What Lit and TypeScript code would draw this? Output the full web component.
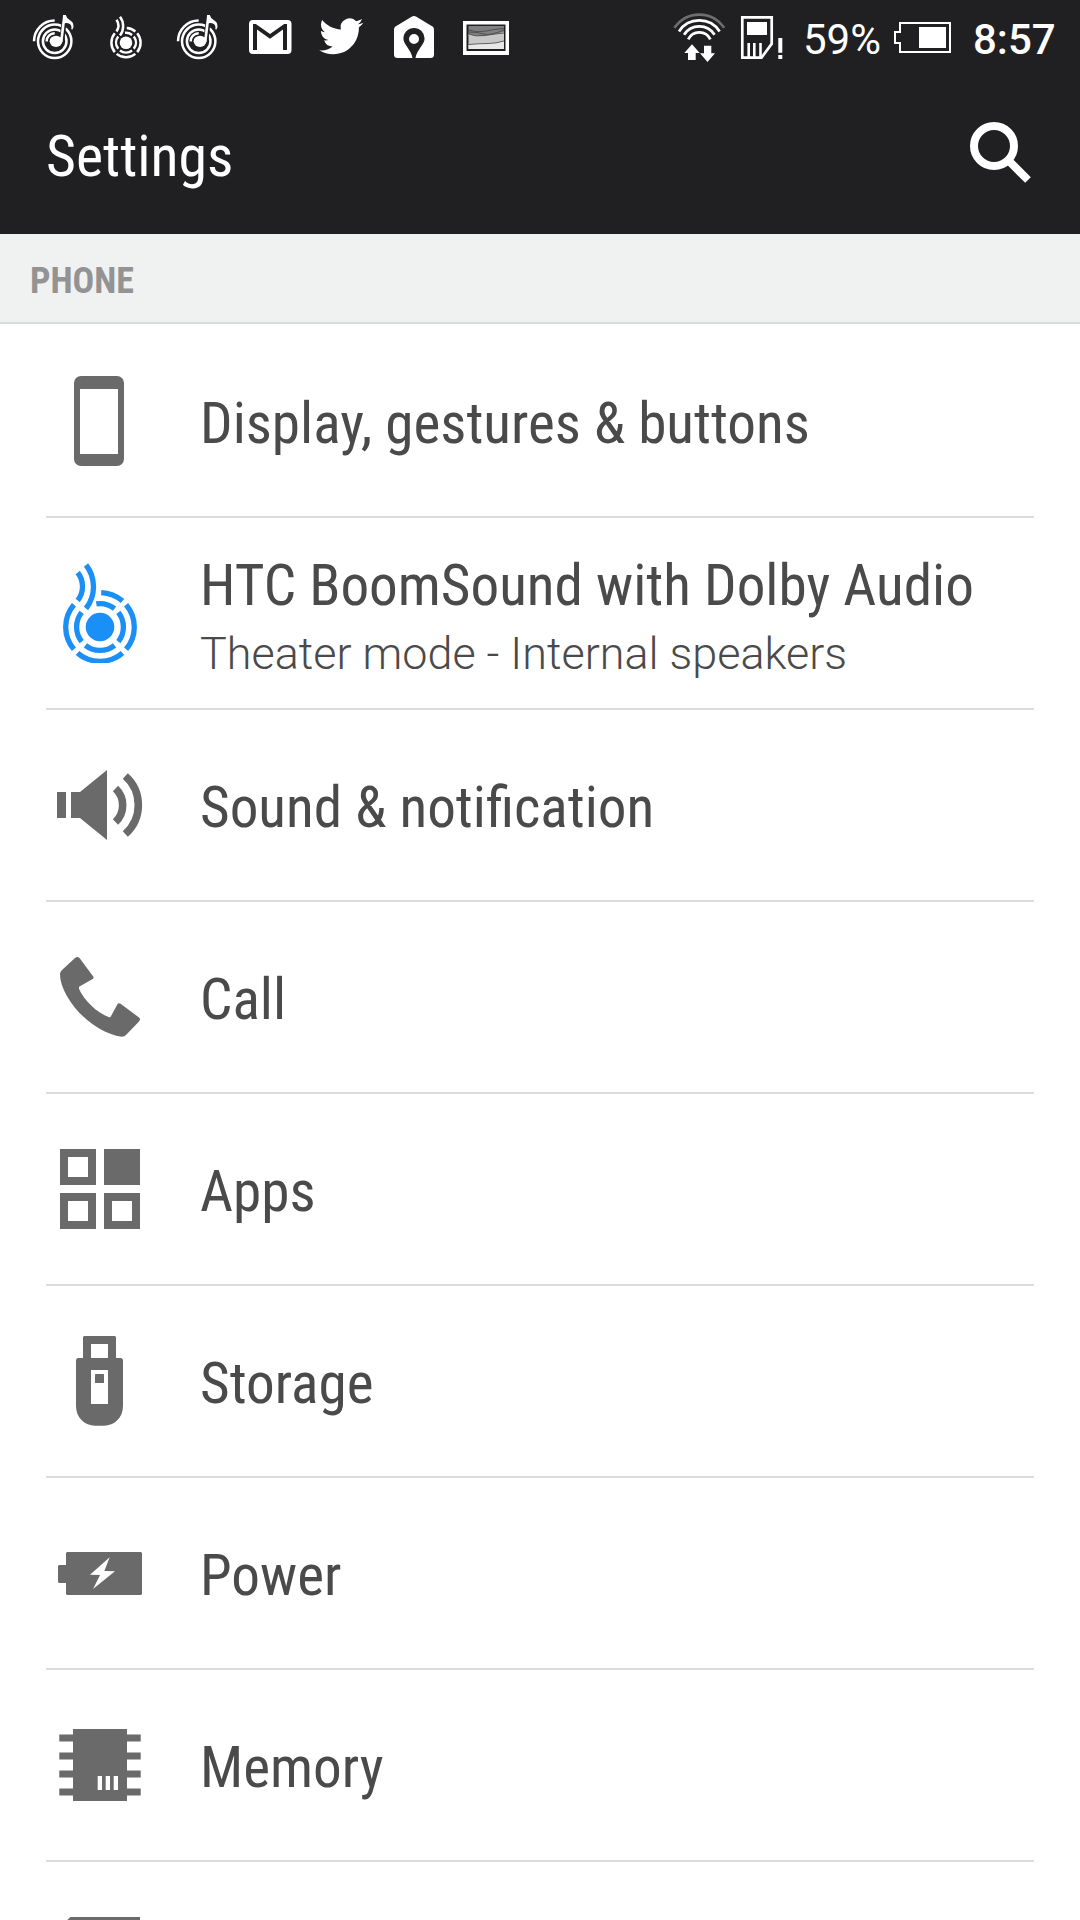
import { LitElement, html, svg, css, TemplateResult, SVGTemplateResult } from "lit";
import { customElement, property } from "lit/decorators.js";

/** Path of a circular arc; angles are in degrees, clockwise from the top. */
const arc = (cx: number, cy: number, r: number, from: number, to: number): string => {
  const at = (deg: number) => {
    const a = (deg * Math.PI) / 180;
    return `${(cx + r * Math.sin(a)).toFixed(2)} ${(cy - r * Math.cos(a)).toFixed(2)}`;
  };
  return `M${at(from)}A${r} ${r} 0 ${to - from > 180 ? 1 : 0} 1 ${at(to)}`;
};

/* ---------- list icons, 100 x 100 ---------- */
const rowIcons: Record<string, SVGTemplateResult> = {
  display: svg`<path fill-rule="evenodd" d="M31 5H67a7 7 0 0 1 7 7V88a7 7 0 0 1-7 7H31a7 7 0 0 1-7-7V12a7 7 0 0 1 7-7ZM30 18V83H68V18Z"/>`,
  boomsound: svg`
    <g fill="none" stroke="#1a8ff5" stroke-width="5.3">
      <path d=${arc(50, 64, 34.3, 2, 41)}/>
      <path d=${arc(50, 64, 34.3, 49.5, 130.5)}/>
      <path d=${arc(50, 64, 34.3, 139, 221)}/>
      <path d=${arc(50, 64, 34.3, 229.5, 310.5)}/>
      <path d=${arc(50, 64, 23.4, -9, 38.5)}/>
      <path d=${arc(50, 64, 23.4, 51.5, 128.5)}/>
      <path d=${arc(50, 64, 23.4, 141.5, 218.5)}/>
      <path d=${arc(50, 64, 23.4, 231.5, 308.5)}/>
      <path d="M36 2A35.3 35.3 0 0 1 36 45.5"/>
      <path d="M27.7 9.5A22.8 22.8 0 0 1 27.7 37.5"/>
    </g>
    <circle cx="50" cy="64" r="14.3" fill="#1a8ff5"/>`,
  sound: svg`
    <path d="M7 37H16V63H7ZM21 37H30L57 15V85L30 63H21Z"/>
    <path fill="none" stroke="#6a6a6a" stroke-width="7.6" d="M65.5 33.5A23 23 0 0 1 65.5 66.9M75.3 21A38.8 38.8 0 0 1 75.3 79"/>`,
  call: svg`<path d="M10 27Q10 25 12 23L25 11Q27.5 9 29.7 11.3L43.2 29.5Q44.3 31 42.6 32L29.5 39.5Q28.6 40.3 29.3 42.5C34 53 47 66 59.2 70.3L60.5 70L67.3 57.5Q68.5 55.3 70.6 56.8L89 70.5Q91 72 89 74.5L76 88Q74.5 89.8 71.5 89.7C40 85 10 50 10 27Z"/>`,
  apps: svg`<path fill-rule="evenodd" d="M10 10H46V46H10ZM18 18V38H38V18ZM54 10H90V46H54ZM10 54H46V90H10ZM18 62V82H38V62ZM54 54H90V90H54ZM62 62V82H82V62Z"/>`,
  storage: svg`
    <path fill-rule="evenodd" d="M34 5H65L66 6V27H71a2.500 2.500 0 0 1 2 2V75C73 87 64 94.700 54 94.700H45C35 94.700 26 87 26 75V29a2.500 2.500 0 0 1 2-2H33V6ZM41 13V27H58V13ZM41 39V73H58V39Z"/>
    <rect x="45" y="43" width="9" height="9" rx=".6"/>`,
  power: svg`<path fill-rule="evenodd" d="M17 29H91L92 30V71L91 72H17L16 71V60H9L8 59V43L9 42H16V30ZM59.700 34.300L40 51.700L50 52L43 66L65 48.300L54.300 48Z"/>`,
  memory: svg`
    <path d="M23 14H77V86H23Z"/>
    <path d="M9.300 19.400H90.700V26.600H9.300ZM9.300 37.400H90.700V44.600H9.300ZM9.300 55.400H90.700V62.600H9.300ZM9.300 73.400H90.700V80.600H9.300Z"/>
    <path fill="#fff" d="M47.700 61H52V75H47.700ZM55.700 61H60V75H55.700ZM63.700 61H68V75H63.700Z"/>`,
  card: svg`<path d="M20.500 10H90V96H10V20Z"/>`,
};

/* ---------- status bar icons, 72 x 76 ---------- */
const music = svg`
  <g fill="none" stroke="#fff" stroke-width="2.500">
    <circle cx="36.700" cy="41.300" r="16.700"/>
    <circle cx="36.700" cy="41.300" r="11.800"/>
    <path d=${arc(36.7, 41.3, 20.7, 270, 360)}/>
    <path d=${arc(36.7, 41.3, 8, 268, 360)}/>
  </g>
  <path fill="none" stroke="#202022" stroke-width="5" d="M44 40L46.600 17"/>
  <ellipse cx="38" cy="41.300" rx="6.400" ry="5.600" fill="#fff"/>
  <path fill="none" stroke="#fff" stroke-width="2.600" d="M43.300 41.500L46.400 15.500"/>
  <path fill="#fff" d="M45 15H47.800Q48.500 18.500 52 20.200Q57.500 23.500 54.500 29.600L53.300 29.200Q54.300 24.500 50 23.300Q47 22.500 45.500 24Z"/>`;

const statusIcons: SVGTemplateResult[] = [
  music,
  svg`
    <g fill="none" stroke="#fff" stroke-width="2.500">
      <path d=${arc(36, 42.7, 14.6, 3, 40)}/>
      <path d=${arc(36, 42.7, 14.6, 50, 130)}/>
      <path d=${arc(36, 42.7, 14.6, 140, 220)}/>
      <path d=${arc(36, 42.7, 14.6, 230, 310)}/>
      <path d=${arc(36, 42.7, 9.9, -6, 38)}/>
      <path d=${arc(36, 42.7, 9.9, 52, 128)}/>
      <path d=${arc(36, 42.7, 9.9, 142, 218)}/>
      <path d=${arc(36, 42.7, 9.9, 232, 308)}/>
      <path d="M30 16.800A15.500 15.500 0 0 1 30 35.500M26.500 19.800A10.500 10.500 0 0 1 26.500 31.500"/>
    </g>
    <circle cx="36" cy="42.700" r="6.300" fill="#fff"/>`,
  music,
  svg`
    <rect x="15" y="20" width="42.500" height="34" rx="4" fill="#fff"/>
    <path fill="#202022" d="M19 50V24H21.800L36 34L50.200 24H53V50H49V29.500L36 38.700L23 29.500V50Z"/>`,
  svg`<path transform="translate(13.200 14.300) scale(1.840)" fill="#fff" d="M23.950 4.570a10 10 0 0 1-2.820.770 4.960 4.960 0 0 0 2.160-2.720c-.950.550-2 .950-3.130 1.180a4.920 4.920 0 0 0-8.380 4.480C7.690 8.100 4.070 6.130 1.640 3.160a4.820 4.820 0 0 0-.670 2.480c0 1.710.870 3.210 2.190 4.100a4.900 4.900 0 0 1-2.230-.620v.060a4.920 4.920 0 0 0 3.950 4.830 5 5 0 0 1-2.210.080 4.940 4.940 0 0 0 4.600 3.420A9.870 9.870 0 0 1 0 19.540a14 14 0 0 0 7.550 2.210c9.050 0 14-7.500 14-13.980 0-.210 0-.420-.020-.630a9.940 9.940 0 0 0 2.460-2.550z"/>`,
  svg`
    <path fill="#fff" d="M33.600 16.700Q36 15.300 38.400 16.700L54.500 26.500Q56 27.500 56 29.500V54.500Q56 58 52.500 58H19.500Q16 58 16 54.500V29.500Q16 27.500 17.500 26.500Z"/>
    <path fill="#202022" fill-rule="evenodd" d="M36 28A10.600 10.600 0 0 1 46.600 38.600C46.600 44.500 38.500 50.500 37.500 58H34.500C33.500 50.500 25.400 44.500 25.400 38.600A10.600 10.600 0 0 1 36 28ZM36 34a5 5 0 1 0 0 10a5 5 0 1 0 0-10Z"/>`,
  svg`
    <path fill="#fff" fill-rule="evenodd" d="M13 21H59V55H13ZM16.500 24.500V51H55.500V24.500Z"/>
    <path fill="#808080" d="M18.500 26H54V36H18.500Z"/>
    <path fill="#c8c8c8" d="M18.500 34Q26 37 35 35.500T54 32V49H18.500Z"/>
    <path fill="#e8e8e8" d="M18.500 44.500Q30 43.500 38 43.500T54 41V49H18.500Z"/>
    <path fill="none" stroke="#444" stroke-width=".8" d="M18.500 30Q27 33 36 31T54 28.500M18.500 34Q26 37 35 35.500T54 33M18.500 44.500Q30 43.500 38 43.500T54 41M18.500 32Q28 32 34 34T54 30"/>`,
];

const wifi = svg`
  <g fill="none" stroke="#fff" stroke-width="2.800">
    <path stroke="#6e6e6f" d=${arc(39.3, 44.6, 30, -56, 56)}/>
    <path d=${arc(39.3, 44.6, 24.2, -57, 57)}/>
    <path d=${arc(39.3, 44.6, 18.2, -57, 57)}/>
    <path d=${arc(39.3, 44.6, 12.2, -65, 65)}/>
  </g>
  <path fill="#fff" d="M32 44.300L39.700 53H35.700V60H28V53H24.300ZM44 45.700H51.300V53.300H55L47.500 62L40 53.300H44Z"/>`;

const sim = svg`
  <path fill="none" stroke="#fff" stroke-width="2.700" d="M7.300 17.300H36.700V43.700L26.500 57.700H7.300Z"/>
  <path fill="#fff" d="M12 22H32V35H12ZM12.400 43H15V57H12.400ZM18 43H20.600V57H18ZM24.200 43H26.800V57H24.200Z"/>
  <path fill="#fff" d="M43.300 38H47.300V52.700H43.300ZM43.300 55H47.300V59H43.300Z"/>`;

@customElement("settings-row")
export class SettingsRow extends LitElement {
  @property() icon = "";
  @property() label = "";
  @property() detail = "";

  static styles = css`
    :host {
      display: flex;
      align-items: center;
      box-sizing: border-box;
      height: 192px;
      flex: none;
      margin: 0 46px;
      padding-left: 4px;
      gap: 50px;
      border-bottom: 2px solid #dcdcdc;
      color: #4a4a4a;
      white-space: nowrap;
    }
    .icon {
      flex: none;
      width: 100px;
      height: 100px;
      fill: #6a6a6a;
    }
    .copy {
      display: flex;
      flex-direction: column;
      padding-top: 6px;
    }
    .copy.double {
      padding-top: 14px;
    }
    .label {
      font: 400 57.2px/68px "Roboto Condensed", Roboto, sans-serif;
      font-stretch: 75%;
    }
    .detail {
      font: 300 44.9px/68px Roboto, sans-serif;
    }
  `;

  render(): TemplateResult {
    return html`
      <svg class="icon" viewBox="0 0 100 100">${rowIcons[this.icon]}</svg>
      <div class=${this.detail ? "copy double" : "copy"}>
        <span class="label">${this.label}</span>
        ${this.detail ? html`<span class="detail">${this.detail}</span>` : ""}
      </div>
    `;
  }
}

@customElement("app-root")
export class AppRoot extends LitElement {
  static styles = css`
    :host {
      display: flex;
      flex-direction: column;
      height: 1920px;
      overflow: hidden;
      background: #fff;
      font-family: Roboto, sans-serif;
    }
    .status {
      display: flex;
      flex: none;
      height: 76px;
      padding-left: 18px;
      background: #202022;
      color: #fff;
    }
    .status svg {
      flex: none;
      height: 76px;
    }
    .cell {
      width: 72px;
    }
    .wifi {
      width: 75px;
      margin-left: 138px;
    }
    .sim {
      width: 55px;
    }
    .percent,
    .clock {
      font-size: 42px;
      line-height: 80px;
      white-space: nowrap;
    }
    .percent {
      width: 91px;
      padding-left: 13px;
    }
    .battery {
      width: 79px;
    }
    .clock {
      font-weight: 500;
    }
    .bar {
      display: flex;
      flex: none;
      align-items: center;
      justify-content: space-between;
      height: 158px;
      padding: 0 40px 0 46px;
      background: #202022;
      color: #fff;
    }
    .title {
      padding-top: 2px;
      font: 400 57.8px/68px "Roboto Condensed", Roboto, sans-serif;
      font-stretch: 75%;
    }
    .search {
      width: 72px;
      height: 72px;
    }
    .section {
      box-sizing: border-box;
      flex: none;
      height: 90px;
      padding-left: 30px;
      border-bottom: 2px solid #d9dbdb;
      background: #f0f2f1;
      color: #939393;
      font: 700 36px/94px "Roboto Condensed", Roboto, sans-serif;
      font-stretch: 75%;
    }
    .list {
      display: flex;
      flex-direction: column;
      padding-top: 2px;
    }
  `;

  render(): TemplateResult {
    return html`
      <div class="status">
        ${statusIcons.map((icon) => html`<svg class="cell" viewBox="0 0 72 76">${icon}</svg>`)}
        <svg class="wifi" viewBox="0 0 75 76">${wifi}</svg>
        <svg class="sim" viewBox="0 0 55 76">${sim}</svg>
        <span class="percent">59%</span>
        <svg class="battery" viewBox="0 0 79 76">
          <path fill="none" stroke="#fff" stroke-width="2" d="M6 23H56V52H6V43H1V32H6Z"/>
          <path fill="#fff" d="M25 27H52V48H25Z"/>
        </svg>
        <span class="clock">8:57</span>
      </div>
      <div class="bar">
        <span class="title">Settings</span>
        <svg class="search" viewBox="0 0 72 72" fill="none" stroke="#fff" stroke-width="8">
          <circle cx="26" cy="27" r="20"/>
          <path d="M40 41L60 61"/>
        </svg>
      </div>
      <div class="section">PHONE</div>
      <div class="list">
        <settings-row icon="display" label="Display, gestures & buttons"></settings-row>
        <settings-row icon="boomsound" label="HTC BoomSound with Dolby Audio" detail="Theater mode - Internal speakers"></settings-row>
        <settings-row icon="sound" label="Sound & notification"></settings-row>
        <settings-row icon="call" label="Call"></settings-row>
        <settings-row icon="apps" label="Apps"></settings-row>
        <settings-row icon="storage" label="Storage"></settings-row>
        <settings-row icon="power" label="Power"></settings-row>
        <settings-row icon="memory" label="Memory"></settings-row>
        <settings-row icon="card"></settings-row>
      </div>
    `;
  }
}
